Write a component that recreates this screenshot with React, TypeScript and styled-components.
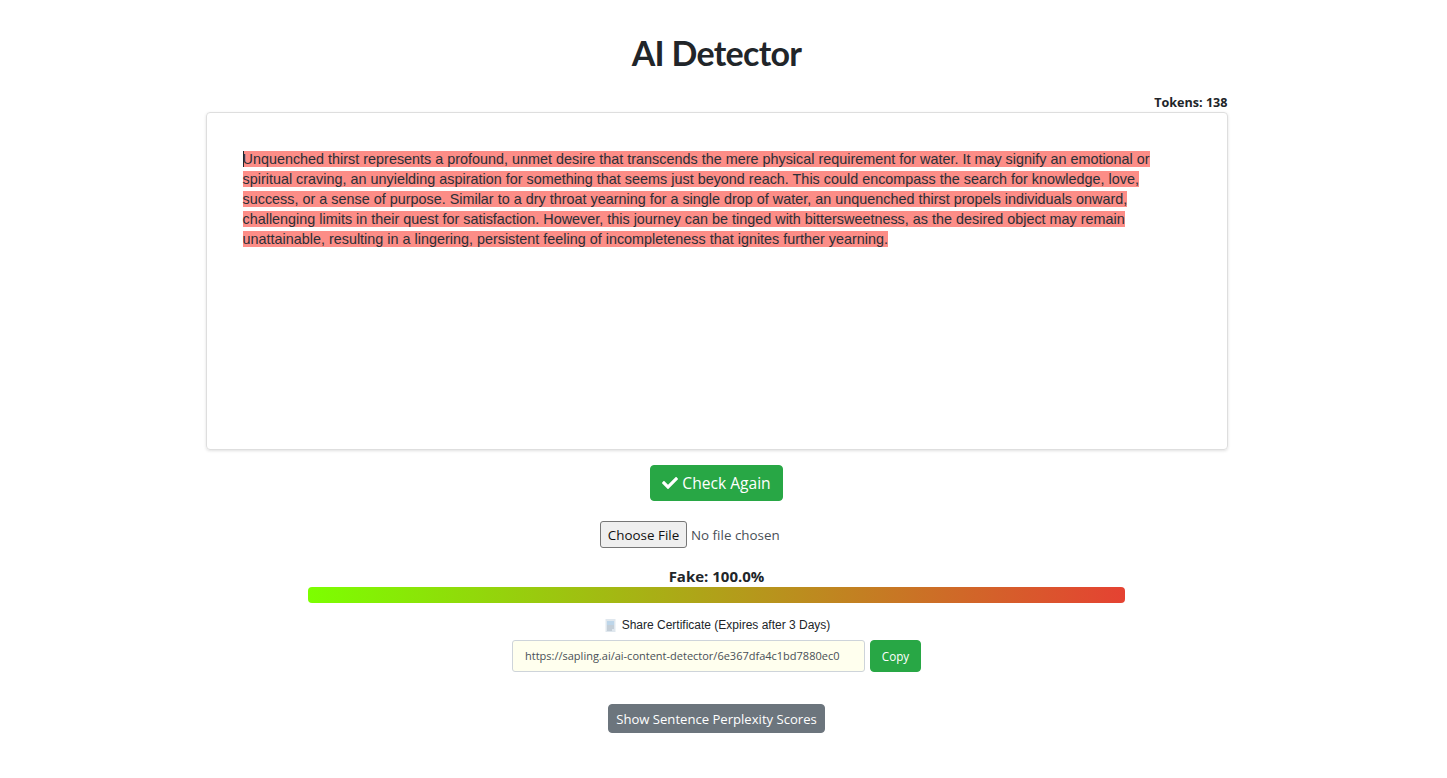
import React from 'react';
import styled, { createGlobalStyle } from 'styled-components';
import { FaCheck } from 'react-icons/fa';

const GlobalStyle = createGlobalStyle`
  html, body {
    margin: 0;
    padding: 0;
    background: #fff;
    color: #212529;
    font-family: 'Open Sans', 'Noto Sans', sans-serif;
  }
`;

// the reference keeps a blank strip on the right, so everything centres on 716.5
const Page = styled.div`
  width: 1433px;
  height: 778px;
  overflow: hidden;
  display: flex;
  flex-direction: column;
  align-items: center;
`;

const Title = styled.h1`
  margin: 31px 0 0;
  height: 44px;
  font-family: 'Lato', sans-serif;
  font-size: 34px;
  line-height: 44px;
  font-weight: 700;
  letter-spacing: -0.7px;
  color: #212529;
`;

const EditorWrap = styled.div`
  width: 1022px;
  margin-top: 19px;
  display: flex;
  flex-direction: column;
`;

const Tokens = styled.div`
  height: 18px;
  font-size: 12.6px;
  line-height: 17px;
  font-weight: 700;
  text-align: right;
`;

const Editor = styled.div`
  box-sizing: border-box;
  height: 338px;
  padding: 36px 36px;
  border: 1px solid #dedede;
  border-radius: 4px;
  box-shadow: 0 1px 3px rgba(0, 0, 0, 0.12);
  font-family: 'Liberation Sans', Arial, sans-serif;
  font-size: 14.4px;
  line-height: 20px;
`;

const Flagged = styled.span`
  background: #fc8d87;
  color: #2b2f36;
`;

const Caret = styled.span`
  position: absolute;
  width: 1px;
  height: 16px;
  margin-top: 2px;
  background: #212529;
`;

const Button = styled.button<{ $tone: 'green' | 'grey'; $size: 'lg' | 'md' | 'sm' }>`
  box-sizing: border-box;
  display: inline-flex;
  align-items: center;
  justify-content: center;
  gap: 4px;
  border: 1px solid ${p => (p.$tone === 'green' ? '#28a745' : '#6c757d')};
  border-radius: 4px;
  background: ${p => (p.$tone === 'green' ? '#28a745' : '#6c757d')};
  color: #fff;
  font-family: 'Open Sans', 'Noto Sans', sans-serif;
  padding: 0;
  font-size: ${p => (p.$size === 'lg' ? '15.6px' : p.$size === 'md' ? '13.1px' : '11.7px')};
  height: ${p => (p.$size === 'lg' ? '36px' : p.$size === 'md' ? '29px' : '32px')};
  width: ${p => (p.$size === 'lg' ? '133px' : p.$size === 'md' ? '217px' : '51px')};
`;

const CheckButton = styled(Button)`
  margin-top: 15px;
`;

const FileRow = styled.div`
  width: 233px;
  margin-top: 20px;
  height: 27px;
  display: flex;
  align-items: center;
  gap: 4px;
  font-size: 13.4px;
  color: #495057;
`;

const ChooseFile = styled.button`
  box-sizing: border-box;
  width: 87px;
  height: 27px;
  padding: 0;
  border: 1px solid #767676;
  border-radius: 3px;
  background: #efefef;
  color: #111;
  font-family: 'Open Sans', 'Noto Sans', sans-serif;
  font-size: 13.4px;
`;

const ScoreLabel = styled.div`
  margin-top: 18px;
  height: 21px;
  font-size: 15px;
  line-height: 21px;
  font-weight: 700;
`;

const Bar = styled.div`
  width: 817px;
  height: 16px;
  border-radius: 4px;
  background: linear-gradient(to right, #7cff00, #e54232);
`;

const ShareLine = styled.div`
  margin-top: 14px;
  height: 16px;
  display: flex;
  align-items: center;
  gap: 6px;
  padding-left: 2px;
  font-family: 'Liberation Sans', Arial, sans-serif;
  font-size: 12px;
  color: #212529;
`;

const ShareRow = styled.div`
  margin-top: 7px;
  display: flex;
  gap: 5px;
`;

const UrlField = styled.div`
  box-sizing: border-box;
  width: 353px;
  height: 32px;
  padding: 0 12px;
  border: 1px solid #ced4da;
  border-radius: 3px;
  background: #ffffee;
  color: #495057;
  font-size: 11px;
  line-height: 30px;
  white-space: nowrap;
  overflow: hidden;
`;

const PerplexityButton = styled(Button)`
  margin-top: 32px;
`;

function DocIcon() {
  return (
    <svg width="11" height="13" viewBox="0 0 11 13">
      <rect x="0.5" y="0" width="10" height="13" fill="#dfe7ee" />
      <path d="M2 3h7M2 5h7" stroke="#9cc4e4" strokeWidth="1" />
      <path d="M2 7h7M2 9h7M2 11h5" stroke="#a9b6c2" strokeWidth="1" />
    </svg>
  );
}

function App() {
  return (
    <Page>
      <GlobalStyle />
      <Title>AI Detector</Title>
      <EditorWrap>
        <Tokens>Tokens: 138</Tokens>
        <Editor>
          <Caret />
          <Flagged>
            Unquenched thirst represents a profound, unmet desire that transcends the mere physical requirement for water. It may signify an emotional or spiritual craving, an unyielding aspiration for something that seems just beyond reach. This could encompass the search for knowledge, love, success, or a sense of purpose. Similar to a dry throat yearning for a single drop of water, an unquenched thirst propels individuals onward, challenging limits in their quest for satisfaction. However, this journey can be tinged with bittersweetness, as the desired object may remain unattainable, resulting in a lingering, persistent feeling of incompleteness that ignites further yearning.
          </Flagged>
        </Editor>
      </EditorWrap>
      <CheckButton $tone="green" $size="lg">
        <FaCheck size={16} />
        Check Again
      </CheckButton>
      <FileRow>
        <ChooseFile>Choose File</ChooseFile>
        No file chosen
      </FileRow>
      <ScoreLabel>Fake: 100.0%</ScoreLabel>
      <Bar />
      <ShareLine>
        <DocIcon />
        Share Certificate (Expires after 3 Days)
      </ShareLine>
      <ShareRow>
        <UrlField>https://sapling.ai/ai-content-detector/6e367dfa4c1bd7880ec0</UrlField>
        <Button $tone="green" $size="sm">Copy</Button>
      </ShareRow>
      <PerplexityButton $tone="grey" $size="md">Show Sentence Perplexity Scores</PerplexityButton>
    </Page>
  );
}

export default App;
